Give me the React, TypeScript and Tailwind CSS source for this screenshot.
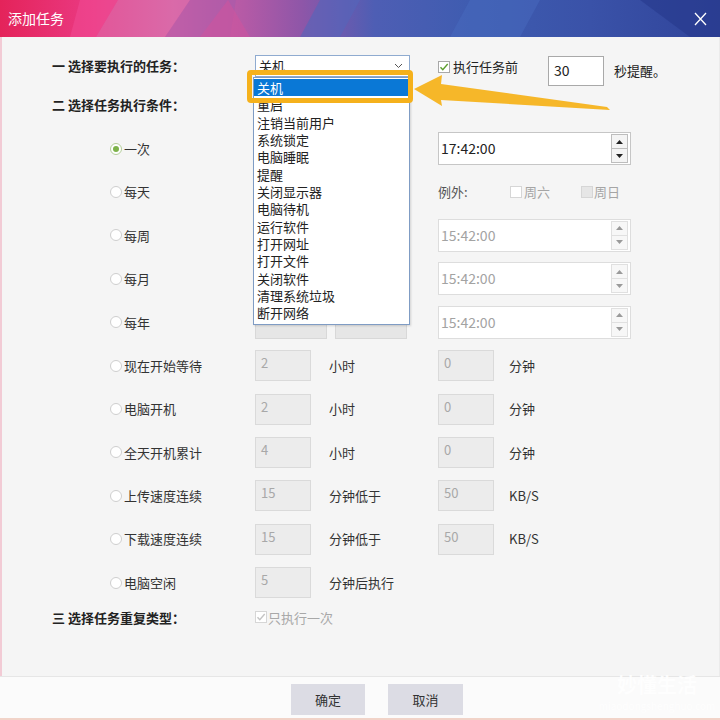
import React from "react";

const TASKS = [
  "关机",
  "重启",
  "注销当前用户",
  "系统锁定",
  "电脑睡眠",
  "提醒",
  "关闭显示器",
  "电脑待机",
  "运行软件",
  "打开网址",
  "打开文件",
  "关闭软件",
  "清理系统垃圾",
  "断开网络",
];

function Radio({ checked = false }: { checked?: boolean }) {
  return (
    <span
      className={`flex h-[12px] w-[12px] shrink-0 items-center justify-center rounded-full border bg-white ${
        checked ? "border-[#b5cf9a]" : "border-[#cfcfcf]"
      }`}
    >
      {checked && <span className="h-[6px] w-[6px] rounded-full bg-[#7db24a]" />}
    </span>
  );
}

function Check({ checked = false, disabled = false, filled = false }: { checked?: boolean; disabled?: boolean; filled?: boolean }) {
  return (
    <span
      className={`flex h-[12px] w-[12px] shrink-0 items-center justify-center border ${
        disabled ? "border-[#d6d6d6]" : "border-[#a8a8a8]"
      } ${filled ? "bg-[#e6e6e6]" : "bg-white"}`}
    >
      {checked && (
        <svg width="10" height="10" viewBox="0 0 10 10" fill="none">
          <path
            d="M1.5 5.2l2.3 2.5L8.7 2"
            stroke={disabled ? "#c4c4c4" : "#5c9e2e"}
            strokeWidth="1.4"
          />
        </svg>
      )}
    </span>
  );
}

function Tri({ up, color }: { up: boolean; color: string }) {
  return (
    <svg width="7" height="4" viewBox="0 0 7 4">
      <path d={up ? "M0 4L3.5 0L7 4z" : "M0 0L3.5 4L7 0z"} fill={color} />
    </svg>
  );
}

function TimeField({ value, active = false }: { value: string; active?: boolean }) {
  const tri = active ? "#222" : "#9a9a9a";
  const btn = active ? "border-[#bdbdbd] bg-[#f4f4f4]" : "border-[#e0e0e0] bg-[#f7f7f7]";
  return (
    <div
      className={`flex h-[33px] w-[193px] items-center border bg-white pl-[2px] pr-[2px] ${
        active ? "border-[#c6c6c6] text-[#222]" : "border-[#dddddd] text-[#a3a3a3]"
      }`}
    >
      <span className="flex-1 text-[14px]">{value}</span>
      <div className="flex h-[29px] w-[17px] flex-col">
        <span className={`flex flex-1 items-center justify-center border ${btn}`}>
          <Tri up color={tri} />
        </span>
        <span className={`flex flex-1 items-center justify-center border border-t-0 ${btn}`}>
          <Tri up={false} color={tri} />
        </span>
      </div>
    </div>
  );
}

function NumBox({ value }: { value: string }) {
  return (
    <div className="h-[31px] w-[56px] shrink-0 border border-[#dadada] bg-[#ececec] pl-[5px] pt-[3px] text-[13px] leading-[18px] text-[#a8a8a8]">
      {value}
    </div>
  );
}

function RadioCell({ label, checked = false }: { label: string; checked?: boolean }) {
  return (
    <div className="flex w-[253px] shrink-0 items-center gap-[2px] pl-[108px]">
      <Radio checked={checked} />
      <span className="text-[13px] text-[#333]">{label}</span>
    </div>
  );
}

function CountRow({
  label,
  a,
  unitA,
  b,
  unitB,
}: {
  label: string;
  a: string;
  unitA: string;
  b?: string;
  unitB?: string;
}) {
  return (
    <div className="flex h-[43.4px] items-center">
      <RadioCell label={label} />
      <div className="flex w-[183px] shrink-0 items-center">
        <NumBox value={a} />
        <span className="ml-[18px] text-[13px] text-[#333]">{unitA}</span>
      </div>
      {b !== undefined && (
        <div className="flex items-center">
          <NumBox value={b} />
          <span className="ml-[15px] text-[13px] text-[#333]">{unitB}</span>
        </div>
      )}
    </div>
  );
}

function DateBoxes() {
  return (
    <div className="flex w-[183px] shrink-0 gap-[8px]">
      <div className="h-[33px] w-[72px] border border-[#d8d8d8] bg-[#e6e6e6]" />
      <div className="h-[33px] w-[72px] border border-[#d8d8d8] bg-[#e6e6e6]" />
    </div>
  );
}

function TitleBar() {
  return (
    <div className="relative flex h-[37px] shrink-0 items-center overflow-hidden bg-[linear-gradient(90deg,#e4235a_0%,#ea3a83_13%,#d862a4_24%,#b45aa6_34%,#8e56a8_42%,#4e5eb4_52%,#3e5cb0_66%,#3a52a8_82%,#30449a_100%)] px-[8px]">
      <svg className="absolute inset-0" width="720" height="37" viewBox="0 0 720 37">
        <polygon points="80,0 118,0 96,37 70,37" fill="#f04a94" opacity="0.55" />
        <polygon points="118,0 190,0 165,37 96,37" fill="#dc72ae" opacity="0.5" />
        <polygon points="190,0 236,0 230,37 165,37" fill="#a25aac" opacity="0.45" />
        <polygon points="200,37 228,0 250,37" fill="#d0549c" opacity="0.55" />
        <polygon points="320,0 360,0 340,37 300,37" fill="#5366bb" opacity="0.6" />
        <polygon points="470,0 540,0 520,37 450,37" fill="#4a6cc0" opacity="0.45" />
        <polygon points="640,0 720,0 720,37 690,37" fill="#26398c" opacity="0.6" />
      </svg>
      <span className="relative text-[14px] text-white">添加任务</span>
      <svg className="absolute right-[13px] top-[12px]" width="13" height="14" viewBox="0 0 13 14">
        <path d="M1 1l11 12M12 1L1 13" stroke="#fff" strokeWidth="1.3" />
      </svg>
    </div>
  );
}

export default function App() {
  return (
    <div className="relative flex h-[720px] w-[720px] flex-col overflow-hidden bg-[#f5f5f5] font-['Noto_Sans_CJK_SC','Microsoft_YaHei',sans-serif] text-[13px] text-[#333]">
      <TitleBar />

      <div className="flex flex-1 flex-col border-l-2 border-r border-l-[#f2cbd5] border-r-[#ebebeb] pt-[18px]">
        {/* 一 */}
        <div className="flex h-[31px] items-start">
          <div className="w-[253px] shrink-0 pl-[50px] text-[13px] font-bold leading-[22px] text-[#222]">
            一 选择要执行的任务：
          </div>
          <div className="flex h-[22px] w-[155px] shrink-0 items-center justify-between border border-[#8fabd0] bg-white pl-[3px] pr-[6px]">
            <span className="text-[13px] text-[#222]">关机</span>
            <svg width="9" height="6" viewBox="0 0 9 6" fill="none">
              <path d="M1 1l3.5 3.5L8 1" stroke="#555" strokeWidth="1" />
            </svg>
          </div>
          <div className="ml-[28px] mt-[1px] flex h-[22px] w-[110px] shrink-0 items-center gap-[3px]">
            <Check checked />
            <span className="text-[13px] text-[#222]">执行任务前</span>
          </div>
          <div className="mt-[1px] h-[30px] w-[56px] shrink-0 border border-[#a9a9a9] bg-white pl-[5px] pt-[3px] text-[14px] leading-[20px] text-[#222]">
            30
          </div>
          <span className="ml-[10px] mt-[5px] text-[13px] leading-[22px] text-[#222]">秒提醒。</span>
        </div>

        {/* 二 */}
        <div className="mt-[9px] h-[20px] pl-[50px] text-[13px] font-bold leading-[20px] text-[#222]">
          二 选择任务执行条件：
        </div>

        <div className="mt-[12px] flex flex-col">
          <div className="flex h-[43.4px] items-center">
            <RadioCell label="一次" checked />
            <div className="w-[183px] shrink-0" />
            <TimeField value="17:42:00" active />
          </div>
          <div className="flex h-[43.4px] items-center">
            <RadioCell label="每天" />
            <div className="w-[183px] shrink-0" />
            <span className="w-[72px] text-[13px] text-[#555]">例外:</span>
            <div className="flex w-[71px] items-center gap-[2px]">
              <Check disabled />
              <span className="text-[13px] text-[#a5a5a5]">周六</span>
            </div>
            <div className="flex items-center gap-[1px]">
              <Check disabled filled />
              <span className="text-[13px] text-[#a5a5a5]">周日</span>
            </div>
          </div>
          <div className="flex h-[43.4px] items-center">
            <RadioCell label="每周" />
            <div className="w-[183px] shrink-0" />
            <TimeField value="15:42:00" />
          </div>
          <div className="flex h-[43.4px] items-center">
            <RadioCell label="每月" />
            <DateBoxes />
            <TimeField value="15:42:00" />
          </div>
          <div className="flex h-[43.4px] items-center">
            <RadioCell label="每年" />
            <DateBoxes />
            <TimeField value="15:42:00" />
          </div>
          <CountRow label="现在开始等待" a="2" unitA="小时" b="0" unitB="分钟" />
          <CountRow label="电脑开机" a="2" unitA="小时" b="0" unitB="分钟" />
          <CountRow label="全天开机累计" a="4" unitA="小时" b="0" unitB="分钟" />
          <CountRow label="上传速度连续" a="15" unitA="分钟低于" b="50" unitB="KB/S" />
          <CountRow label="下载速度连续" a="15" unitA="分钟低于" b="50" unitB="KB/S" />
          <CountRow label="电脑空闲" a="5" unitA="分钟后执行" />
        </div>

        {/* 三 */}
        <div className="mt-[3px] flex h-[20px] items-center">
          <div className="w-[253px] shrink-0 pl-[50px] text-[13px] font-bold text-[#222]">
            三 选择任务重复类型：
          </div>
          <div className="flex items-center gap-[1px]">
            <Check checked disabled />
            <span className="text-[13px] text-[#a8a8a8]">只执行一次</span>
          </div>
        </div>
      </div>

      <footer className="flex h-[44px] shrink-0 items-start gap-[23px] border-b-2 border-t border-b-[#f1d3c8] border-t-[#e6e6e6] bg-[#fbfbfb] pl-[291px] pt-[7px]">
        <button className="h-[31px] w-[74px] bg-[#dcdce4] text-[13px] text-[#333]">确定</button>
        <button className="h-[31px] w-[75px] bg-[#dcdce4] text-[13px] text-[#333]">取消</button>
      </footer>

      {/* open dropdown list */}
      <div className="absolute left-[253px] top-[77px] flex w-[157px] flex-col border border-[#7f9cc4] bg-white pb-[2px] pt-[1px] shadow-[1px_1px_2px_rgba(0,0,0,0.15)]">
        {TASKS.map((t, i) => (
          <div
            key={t}
            className={`h-[17.35px] pl-[3px] text-[13px] leading-[17.35px] ${
              i === 0 ? "bg-[#0a78d6] text-white" : "text-[#222]"
            }`}
          >
            {t}
          </div>
        ))}
      </div>

      {/* annotation: highlight frame + arrow */}
      <div className="absolute left-[247px] top-[70px] h-[33px] w-[166px] rounded-[4px] border-[5px] border-[#f5b11c]" />
      <svg className="pointer-events-none absolute left-0 top-0" width="720" height="720" viewBox="0 0 720 720">
        <polygon
          points="414,89 442,75 441,84 607,107 610,110 441,100 442,106"
          fill="#f6b31d"
          opacity="0.95"
        />
      </svg>

      {/* watermark */}
      <div className="pointer-events-none absolute bottom-[8px] right-[2px] flex w-[122px] flex-col items-center gap-[3px]">
        <div className="h-[24px] text-[20px] font-bold leading-[24px] text-white opacity-90">妙懂生活</div>
        <div className="h-[12px] text-[10px] leading-[12px] text-white opacity-90">miaodongshenghuo.com</div>
      </div>
    </div>
  );
}
